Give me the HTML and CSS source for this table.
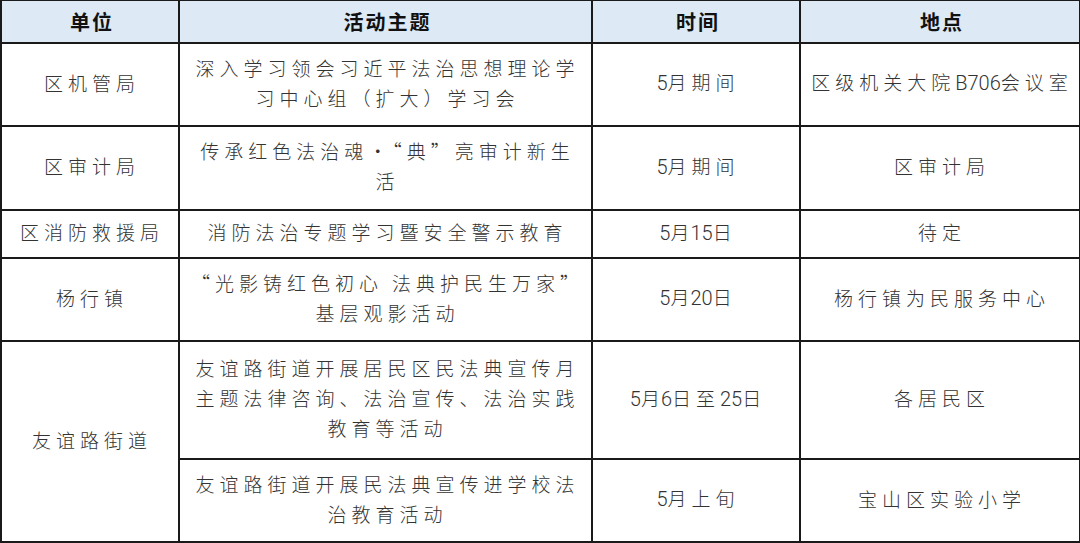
FILE: index.html
```html
<!DOCTYPE html>
<html lang="zh-CN">
<head>
<meta charset="utf-8">
<title>活动安排</title>
<link rel="stylesheet" href="styles.css">
</head>
<body>
<table class="schedule">
  <colgroup>
    <col class="c-unit">
    <col class="c-topic">
    <col class="c-time">
    <col class="c-place">
  </colgroup>
  <thead>
    <tr class="r-head">
      <th>单位</th>
      <th>活动主题</th>
      <th>时间</th>
      <th>地点</th>
    </tr>
  </thead>
  <tbody>
    <tr class="r-1">
      <td>区机管局</td>
      <td>深入学习领会习近平法治思想理论学<br>习中心组（扩大）学习会</td>
      <td><span class="num">5</span>月期间</td>
      <td>区级机关大院<span class="num">B706</span>会议室</td>
    </tr>
    <tr class="r-2">
      <td>区审计局</td>
      <td>传承红色法治魂・“典”亮审计新生<br>活</td>
      <td><span class="num">5</span>月期间</td>
      <td>区审计局</td>
    </tr>
    <tr class="r-3">
      <td>区消防救援局</td>
      <td>消防法治专题学习暨安全警示教育</td>
      <td><span class="num">5</span><span class="tight">月</span><span class="num">15</span>日</td>
      <td>待定</td>
    </tr>
    <tr class="r-4">
      <td>杨行镇</td>
      <td>“光影铸红色初心 法典护民生万家”<br>基层观影活动</td>
      <td><span class="num">5</span><span class="tight">月</span><span class="num">20</span>日</td>
      <td>杨行镇为民服务中心</td>
    </tr>
    <tr class="r-5">
      <td rowspan="2">友谊路街道</td>
      <td>友谊路街道开展居民区民法典宣传月<br>主题法律咨询、法治宣传、法治实践<br>教育等活动</td>
      <td><span class="num">5</span><span class="tight">月</span><span class="num">6</span>日至<span class="num">25</span>日</td>
      <td>各居民区</td>
    </tr>
    <tr class="r-6">
      <td>友谊路街道开展民法典宣传进学校法<br>治教育活动</td>
      <td><span class="num">5</span>月上旬</td>
      <td>宝山区实验小学</td>
    </tr>
  </tbody>
</table>
</body>
</html>
```

FILE: styles.css
```css
html, body {
  margin: 0;
  padding: 0;
  background: #ffffff;
}

.schedule {
  border-collapse: collapse;
  table-layout: fixed;
  width: 1079px;
  font-family: "Noto Sans CJK SC", sans-serif;
  color: #333333;
}

.c-unit { width: 178px; }
.c-topic { width: 413px; }
.c-time { width: 208px; }
.c-place { width: 280px; }

.schedule th,
.schedule td {
  border: 2px solid #1a1a1a;
  text-align: center;
  vertical-align: middle;
  padding: 0 0 0 4px;
}

.schedule th {
  background: #dde9f5;
  font-weight: 700;
  font-size: 20px;
  letter-spacing: 2px;
  color: #111111;
  border-top-width: 1px;
}

.schedule td {
  font-size: 19px;
  font-weight: 300;
  line-height: 30px;
  letter-spacing: 5px;
  padding-bottom: 3px;
}

.num {
  letter-spacing: 0;
  font-family: Roboto, "Liberation Sans", sans-serif;
  font-weight: 300;
  font-size: 20px;
  color: #333333;
}

.tight {
  letter-spacing: 1px;
}

.r-head { height: 42px; }
.r-1 { height: 83px; }
.r-2 { height: 84px; }
.r-3 { height: 48px; }
.r-4 { height: 83px; }
.r-5 { height: 118px; }
.r-6 { height: 83px; }
```
